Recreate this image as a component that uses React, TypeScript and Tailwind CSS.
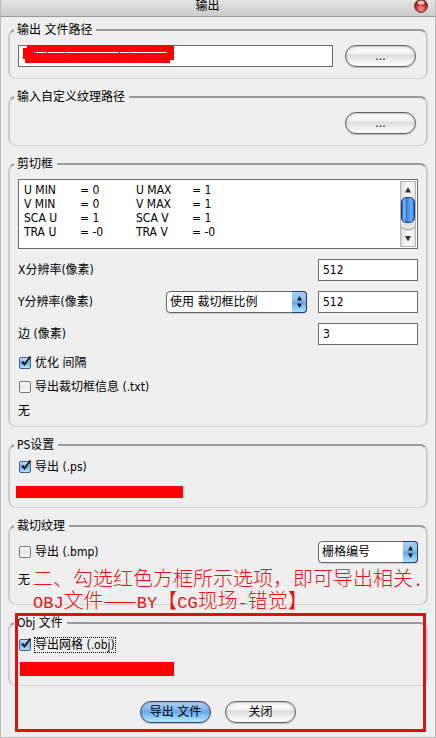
import type { ReactNode } from 'react';

const sans = "font-['DejaVu_Sans_Condensed','Noto_Sans_CJK_SC',sans-serif]";

function Group({ title, children }: { title: string; children: ReactNode }) {
  return (
    <fieldset className="min-w-0 rounded-lg border-x-2 border-t-2 border-b border-x-[#cdcdcd] border-t-[#9b9b9b] border-b-[#d6d6d6] px-2">
      <legend className="-ml-1 pr-1 pl-[3px] leading-4">{title}</legend>
      {children}
    </fieldset>
  );
}

function PillButton({ children, primary, label }: { children: ReactNode; primary?: boolean; label?: string }) {
  return (
    <button
      type="button"
      aria-label={label}
      className={
        'h-[22px] w-[71px] shrink-0 rounded-full border leading-4 shadow-[0_1px_1px_#bbbbbb,inset_0_1px_2px_#88888888] ' +
        (primary
          ? 'border-[#36437c] bg-linear-to-b from-[#b9d6f6] via-[#68a9ec] to-[#b4eeff]'
          : 'border-[#636363] bg-[linear-gradient(#ffffff,#f1f1f1_40%,#dddddd_45%,#ffffff)]')
      }
    >
      {children}
    </button>
  );
}

function Check({ children, checked, focused }: { children: ReactNode; checked?: boolean; focused?: boolean }) {
  return (
    <label className="relative flex h-6 items-center gap-[3px] pl-px">
      <input
        type="checkbox"
        defaultChecked={checked}
        className="peer size-3 appearance-none rounded-xs border border-[#777777] bg-linear-to-b from-white via-[#e6e6e6] to-white checked:border-[#42618c] checked:from-[#c4def8] checked:via-[#76b2ef] checked:to-[#a9e5ff]"
      />
      <svg className="pointer-events-none absolute top-1 left-px hidden size-[14px] peer-checked:block" viewBox="0 0 14 14" fill="none">
        <path d="M3 6.5 L5.5 9.5 L11.5 1.5" stroke="#101820" strokeWidth="2" />
      </svg>
      <span className={focused ? 'px-px leading-4 outline-1 -outline-offset-1 outline-dotted outline-black' : 'px-px leading-4'}>
        {children}
      </span>
    </label>
  );
}

function Dropdown({ label, value, width }: { label: string; value: string; width: string }) {
  return (
    <div className={'relative h-[22px] shrink-0 ' + width}>
      <select
        aria-label={label}
        className="h-full w-full appearance-none rounded-[4px] border border-[#666666] bg-white pr-4 pl-[3px] leading-4 shadow-[0_1px_1px_#cccccc]"
      >
        <option>{value}</option>
      </select>
      <span className="pointer-events-none absolute inset-y-0 right-0 flex w-[15px] items-center justify-center rounded-r-[4px] border-y border-r border-[#253f77] bg-[linear-gradient(#a9cbf0,#8bbcf0_45%,#64a5e8_50%,#a8e4ff)]">
        <svg width="7" height="12" viewBox="0 0 7 12" fill="#111827">
          <path d="M3.5 0 L6 4.5 H1 Z M3.5 12 L1 7.5 H6 Z" />
        </svg>
      </span>
    </div>
  );
}

function NumberBox({ id, value }: { id: string; value: string }) {
  return (
    <input
      id={id}
      type="text"
      defaultValue={value}
      className="h-[22px] w-[100px] shrink-0 border border-[#6b6b6b] bg-white px-1 leading-4"
    />
  );
}

function Latin({ children }: { children: ReactNode }) {
  return <span className="font-['Liberation_Mono',monospace] text-[17px] leading-none">{children}</span>;
}

const clipInfo = ['U MIN\t= 0\tU MAX\t= 1', 'V MIN\t= 0\tV MAX\t= 1', 'SCA U\t= 1\tSCA V\t= 1', 'TRA U\t= -0\tTRA V\t= -0'].join('\n');

export default function App() {
  return (
    <main className={'border-x border-b border-[#b9b9b9] bg-[#efefef] text-[12px] text-black ' + sans}>
      <header className="flex h-[17px] items-start overflow-hidden border-b border-[#999999] bg-linear-to-b from-[#e4e4e4] to-[#cbcbcb] pr-[7px]">
        <h1 className="flex-1 text-center leading-3">输出</h1>
        <button type="button" aria-label="关闭窗口" className="h-[13px] w-[14px]">
          <svg width="14" height="13" viewBox="0 0 14 13">
            <defs>
              <radialGradient id="ball" cx="50%" cy="72%" r="60%">
                <stop offset="0" stopColor="#ff9a94" />
                <stop offset="0.55" stopColor="#d43a3a" />
                <stop offset="1" stopColor="#7d1518" />
              </radialGradient>
            </defs>
            <circle cx="7" cy="6" r="6.5" fill="url(#ball)" stroke="#5f3030" strokeWidth="0.8" />
            <ellipse cx="7" cy="2.6" rx="3.6" ry="2" fill="#ffe9e6" opacity="0.75" />
          </svg>
        </button>
      </header>

      <form className="flex flex-col gap-2.5 px-[7px] pt-[5px]">
        <Group title="输出 文件路径">
          <div className="flex items-center gap-3 pt-[7px] pr-[2px] pb-[11px]">
            <div className="relative min-w-0 flex-1">
              <input
                type="text"
                aria-label="输出 文件路径"
                className="block h-[22px] w-full border border-[#6b6b6b] bg-white px-1"
              />
              <svg className="absolute top-0 left-[5px]" width="151" height="18" viewBox="0 0 151 18">
                <path d="M4 0 H151 V15 H147 V18 H2 V14 H0 V3 H4 Z" fill="#ff0000" />
                <path d="M11 7.5 H12 M13 7.5 H24 M25 7.5 H42 M43 7.5 H96 M97 7.5 H106 M107 7.5 H144" stroke="#ffffff" />
              </svg>
            </div>
            <PillButton label="浏览输出文件路径">...</PillButton>
          </div>
        </Group>

        <Group title="输入自定义纹理路径">
          <div className="flex justify-end pt-[7px] pr-[2px] pb-[11px]">
            <PillButton label="浏览纹理路径">...</PillButton>
          </div>
        </Group>

        <Group title="剪切框">
          <div className="flex flex-col gap-2.5 pt-[7px]">
            <div className="relative">
              <textarea
                readOnly
                aria-label="剪切框"
                value={clipInfo}
                className="block h-[70px] w-full resize-none overflow-hidden border border-[#6b6b6b] bg-white px-[5px] py-[3px] leading-[14px] whitespace-pre [tab-size:56px]"
              />
              <div className="absolute top-[2px] right-[2px] bottom-[2px] flex w-4 flex-col items-center border border-[#b5b5b5] bg-linear-to-r from-[#dcdcdc] via-white to-[#e6e6e6]">
                <svg width="14" height="64" viewBox="0 0 14 64">
                  <defs>
                    <linearGradient id="thumb">
                      <stop offset="0" stopColor="#1749ae" />
                      <stop offset="0.2" stopColor="#8fbdf5" />
                      <stop offset="0.38" stopColor="#3779dc" />
                      <stop offset="0.75" stopColor="#63b4fa" />
                      <stop offset="1" stopColor="#2a6bc4" />
                    </linearGradient>
                  </defs>
                  <path d="M0 14 Q7 18 14 14 V46 Q7 52 0 46 Z" fill="#e4e4e4" />
                  <path d="M0 45 Q7 51 14 45" fill="none" stroke="#999999" />
                  <path d="M7 5 L10 10.5 H4 Z M7 59.5 L4 54 H10 Z" fill="#333333" />
                  <rect x="0.5" y="15.5" width="13" height="25" rx="5" fill="url(#thumb)" stroke="#17306e" />
                </svg>
              </div>
            </div>
            <div className="flex items-center justify-between">
              <label htmlFor="resX">X分辨率(像素)</label>
              <NumberBox id="resX" value="512" />
            </div>
            <div className="flex items-center gap-[11px]">
              <label htmlFor="resY" className="flex-1">Y分辨率(像素)</label>
              <Dropdown label="分辨率比例" value="使用 裁切框比例" width="w-[141px]" />
              <NumberBox id="resY" value="512" />
            </div>
            <div className="flex items-center justify-between">
              <label htmlFor="edge">边 (像素)</label>
              <NumberBox id="edge" value="3" />
            </div>
          </div>
          <div className="pt-1.5 pb-[3px]">
            <Check checked>优化 间隔</Check>
            <Check>导出裁切框信息 (.txt)</Check>
            <p className="leading-6">无</p>
          </div>
        </Group>

        <Group title="PS设置">
          <div className="pt-[2px] pb-1">
            <Check checked>导出 (.ps)</Check>
            <div className="-ml-[2px] flex h-6 items-center">
              <span className="mt-[2px] h-3 w-[167px] bg-[#ff0000]" />
            </div>
          </div>
        </Group>

        <div className="relative">
          <Group title="裁切纹理">
            <div className="flex items-center justify-between pt-1.5">
              <Check>导出 (.bmp)</Check>
              <Dropdown label="编号方式" value="栅格编号" width="w-[100px]" />
            </div>
            <p className="pt-1 pb-3 leading-6">无</p>
          </Group>
          <div className="absolute top-[50px] left-[25px] font-['Noto_Sans_CJK_SC',sans-serif] text-[20px] leading-5 font-light whitespace-nowrap text-[#e81414]">
            <p>
              二、勾选红色方框所示选项，即可导出相关<Latin>.</Latin>
            </p>
            <p>
              <Latin>OBJ</Latin>文件——<Latin>BY</Latin>【<Latin>CG</Latin>现场<Latin>-</Latin>错觉】
            </p>
          </div>
        </div>

        <div className="relative">
          <Group title="Obj 文件">
            <div className="pt-[2px] pb-1">
              <Check checked focused>导出网格 (.obj)</Check>
              <div className="flex h-6 items-center pl-[2px]">
                <span className="h-[14px] w-[154px] bg-[#ff0000]" />
              </div>
            </div>
          </Group>
          <div className="flex justify-center gap-[14px] pt-[15px] pb-[14px]">
            <PillButton primary>导出 文件</PillButton>
            <PillButton>关闭</PillButton>
          </div>
          <div className="pointer-events-none absolute -top-[2px] right-[2px] bottom-[5px] left-[7px] border-3 border-[#e01010]" />
        </div>
      </form>
    </main>
  );
}
